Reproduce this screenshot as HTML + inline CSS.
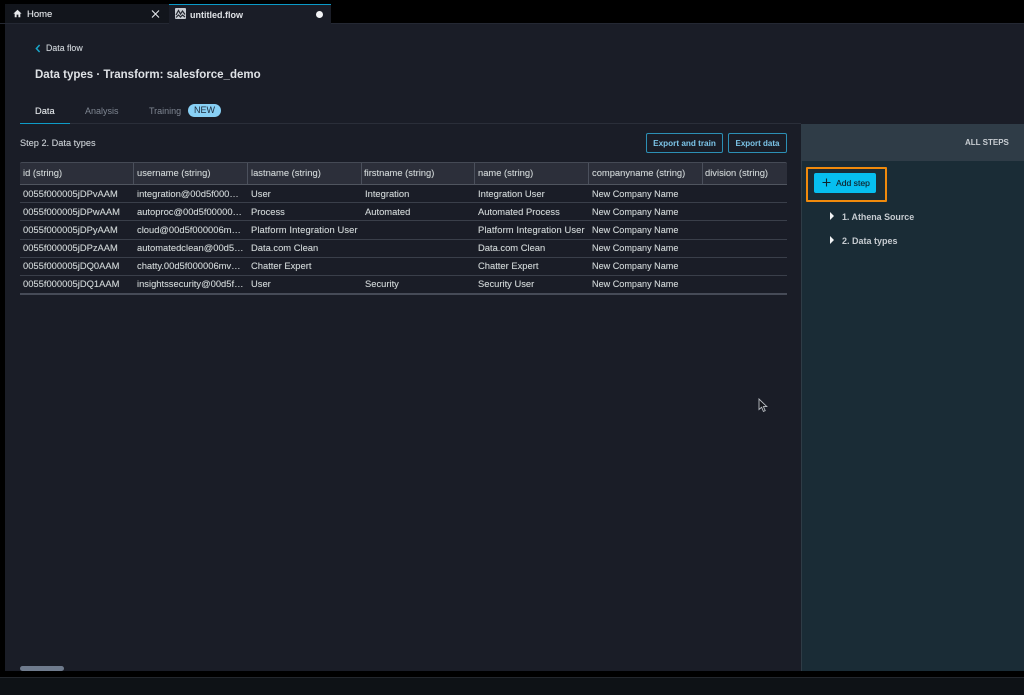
<!DOCTYPE html>
<html lang="en">
<head>
<meta charset="utf-8">
<title>untitled.flow</title>
<style>
html,body{margin:0;padding:0;background:#000;}
body{width:1024px;height:695px;overflow:hidden;position:relative;font-family:"Liberation Sans",sans-serif;}
#w{position:absolute;left:0;top:0;width:1024px;height:695px;filter:blur(.35px);}
.a{position:absolute;}
.t{position:absolute;white-space:nowrap;font-size:9.4px;line-height:12px;color:#ccd2d3;text-shadow:0 0 .4px rgba(213,219,219,.7);}
.h{color:#ccd2d3;}
.c{font-size:9.1px;}
.p{letter-spacing:.1px;}
.l{position:absolute;left:20px;width:767px;height:1px;background:#3a3f4a;}
.v{position:absolute;top:163px;width:1px;height:22px;background:#4b505c;}
</style>
</head>
<body>
<div id="w">
<!-- tab bar -->
<div class="a" style="left:5px;top:4px;width:164px;height:19px;background:#12151c;"></div>
<div class="a" style="left:169px;top:4px;width:162px;height:20px;background:#1a1d27;border-top:1.5px solid #0a9ac8;box-sizing:border-box;"></div>
<svg class="a" style="left:13px;top:9px" width="9" height="9" viewBox="0 0 9 9"><path d="M4.5 .8 L8.6 4.6 H7.3 V8.2 H5.4 V5.6 H3.6 V8.2 H1.7 V4.6 H.4 Z" fill="#e8eaed"/></svg>
<div class="t" style="left:27px;top:8.5px;font-size:9.5px;color:#e3e6ea;">Home</div>
<svg class="a" style="left:151px;top:9px" width="9" height="10" viewBox="0 0 9 10"><path d="M1 1.5 L8 8.5 M8 1.5 L1 8.5" stroke="#e3e6ea" stroke-width="1.1" fill="none"/></svg>
<svg class="a" style="left:175px;top:8px" width="11" height="11" viewBox="0 0 11 11"><rect width="11" height="11" rx="1" fill="#c8ccd2"/><path d="M1 7 L3.5 2.5 L5.5 6 L7.5 3 L10 6.5 M1 9.5 L3.5 7 L5.5 9 L7.5 7 L10 9" stroke="#23262f" stroke-width="1.2" fill="none"/></svg>
<div class="t" style="left:190px;top:8.5px;font-size:9px;font-weight:bold;color:#dfe2e6;text-shadow:none;">untitled.flow</div>
<div class="a" style="left:316px;top:10.5px;width:7px;height:7px;border-radius:50%;background:#f2f3f5;"></div>
<!-- main -->
<div class="a" style="left:5px;top:23px;width:1019px;height:648px;background:#1a1d27;"></div>
<div class="a" style="left:0;top:23px;width:1024px;height:1px;background:#242833;"></div>
<div class="a" style="left:169px;top:23px;width:162px;height:1px;background:#1a1d27;"></div>
<svg class="a" style="left:35px;top:44px" width="6" height="9" viewBox="0 0 6 9"><path d="M4.6 1 L1.4 4.5 L4.6 8" stroke="#19a6c9" stroke-width="1.5" fill="none"/></svg>
<div class="t" style="left:46px;top:42px;font-size:8.8px;color:#c9ced4;">Data flow</div>
<div class="t" style="left:35px;top:68px;font-size:11.5px;line-height:15px;font-weight:bold;color:#dfe2e6;text-shadow:none;">Data types · Transform: salesforce_demo</div>
<div class="t" style="left:35px;top:104.5px;font-size:9.3px;color:#e0e3e7;">Data</div>
<div class="t" style="left:85px;top:104.5px;font-size:9px;color:#7f8692;text-shadow:none;">Analysis</div>
<div class="t" style="left:149px;top:104.5px;font-size:9px;color:#7f8692;text-shadow:none;">Training</div>
<div class="a" style="left:188px;top:104px;width:33px;height:13px;border-radius:7px;background:#88d0f5;color:#1c2a3a;font-size:9px;line-height:13px;text-align:center;">NEW</div>
<div class="a" style="left:20px;top:123px;width:781px;height:1px;background:#2a2e39;"></div>
<div class="a" style="left:20px;top:122.5px;width:50px;height:1.5px;background:#0e9cc8;"></div>
<!-- subheader -->
<div class="t" style="left:20px;top:137px;font-size:9.2px;color:#c6cbd1;">Step 2. Data types</div>
<div class="a" style="left:646px;top:133px;width:77px;height:20px;box-sizing:border-box;border:1px solid #2c8fb5;border-radius:2px;color:#7cc4e8;font-size:8.2px;font-weight:bold;line-height:19px;text-align:center;">Export and train</div>
<div class="a" style="left:728px;top:133px;width:59px;height:20px;box-sizing:border-box;border:1px solid #2c8fb5;border-radius:2px;color:#7cc4e8;font-size:8px;font-weight:bold;line-height:19px;text-align:center;">Export data</div>
<!-- table -->
<div class="a" style="left:20px;top:162px;width:767px;height:23px;background:#2c2f3a;border-top:1px solid #454a55;box-sizing:border-box;border-radius:2px 2px 0 0;"></div>
<div class="v" style="left:133px"></div><div class="v" style="left:247px"></div><div class="v" style="left:361px"></div><div class="v" style="left:474px"></div><div class="v" style="left:588px"></div><div class="v" style="left:702px"></div>
<div class="l" style="top:184px;background:#50555f;"></div>
<div class="l" style="top:202px"></div><div class="l" style="top:220px"></div><div class="l" style="top:239px"></div><div class="l" style="top:257px"></div><div class="l" style="top:275px"></div>
<div class="l" style="top:293px;height:2px;background:#464b57;"></div>

<div class="t h" style="left:23px;top:167px">id (string)</div>
<div class="t h" style="left:137px;top:167px">username (string)</div>
<div class="t h" style="left:251px;top:167px">lastname (string)</div>
<div class="t h" style="left:364px;top:167px">firstname (string)</div>
<div class="t h" style="left:478px;top:167px">name (string)</div>
<div class="t h" style="left:592px;top:167px">companyname (string)</div>
<div class="t h" style="left:705px;top:167px">division (string)</div>

<div class="t" style="left:23px;top:187.5px">0055f000005jDPvAAM</div>
<div class="t" style="left:137px;top:187.5px">integration@00d5f000…</div>
<div class="t" style="left:251px;top:187.5px">User</div>
<div class="t" style="left:365px;top:187.5px">Integration</div>
<div class="t" style="left:478px;top:187.5px">Integration User</div>
<div class="t c" style="left:592px;top:187.5px">New Company Name</div>

<div class="t" style="left:23px;top:205.5px">0055f000005jDPwAAM</div>
<div class="t" style="left:137px;top:205.5px">autoproc@00d5f00000…</div>
<div class="t" style="left:251px;top:205.5px">Process</div>
<div class="t" style="left:365px;top:205.5px">Automated</div>
<div class="t" style="left:478px;top:205.5px">Automated Process</div>
<div class="t c" style="left:592px;top:205.5px">New Company Name</div>

<div class="t" style="left:23px;top:223.5px">0055f000005jDPyAAM</div>
<div class="t" style="left:137px;top:223.5px">cloud@00d5f000006m…</div>
<div class="t p" style="left:251px;top:223.5px">Platform Integration User</div>
<div class="t p" style="left:478px;top:223.5px">Platform Integration User</div>
<div class="t c" style="left:592px;top:223.5px">New Company Name</div>

<div class="t" style="left:23px;top:241.5px">0055f000005jDPzAAM</div>
<div class="t" style="left:137px;top:241.5px">automatedclean@00d5…</div>
<div class="t" style="left:251px;top:241.5px">Data.com Clean</div>
<div class="t" style="left:478px;top:241.5px">Data.com Clean</div>
<div class="t c" style="left:592px;top:241.5px">New Company Name</div>

<div class="t" style="left:23px;top:260px">0055f000005jDQ0AAM</div>
<div class="t" style="left:137px;top:260px">chatty.00d5f000006mv…</div>
<div class="t" style="left:251px;top:260px">Chatter Expert</div>
<div class="t" style="left:478px;top:260px">Chatter Expert</div>
<div class="t c" style="left:592px;top:260px">New Company Name</div>

<div class="t" style="left:23px;top:278px">0055f000005jDQ1AAM</div>
<div class="t" style="left:137px;top:278px">insightssecurity@00d5f…</div>
<div class="t" style="left:251px;top:278px">User</div>
<div class="t" style="left:365px;top:278px">Security</div>
<div class="t" style="left:478px;top:278px">Security User</div>
<div class="t c" style="left:592px;top:278px">New Company Name</div>

<!-- cursor -->
<svg class="a" style="left:758px;top:398px" width="11" height="15" viewBox="0 0 11 15"><path d="M1 1 V11.5 L3.6 9.2 L5.4 13.4 L7.2 12.6 L5.4 8.6 H8.8 Z" fill="#14161c" stroke="#b9bdc3" stroke-width=".9"/></svg>

<!-- right panel -->
<div class="a" style="left:801px;top:124px;width:223px;height:547px;background:#1a2c36;border-left:1px solid #2f3c46;box-sizing:border-box;"></div>
<div class="a" style="left:801px;top:124px;width:223px;height:37px;background:#2f3c47;"></div>
<div class="t" style="left:965px;top:136.5px;font-size:8px;font-weight:bold;color:#c9ced3;text-shadow:none;">ALL STEPS</div>
<div class="a" style="left:806px;top:167px;width:81px;height:35px;box-sizing:border-box;border:2.5px solid #f08a0c;border-radius:1px;"></div>
<div class="a" style="left:814px;top:173px;width:62px;height:20px;background:#06bff0;border-radius:2px;"></div>
<svg class="a" style="left:822px;top:178px" width="9" height="9" viewBox="0 0 9 9"><path d="M4.5 .5 V8.5 M.5 4.5 H8.5" stroke="#10222c" stroke-width="1.1" fill="none"/></svg>
<div class="t" style="left:836px;top:177px;font-size:8.6px;color:#10222c;text-shadow:0 0 .4px rgba(16,34,44,.7);">Add step</div>
<svg class="a" style="left:830px;top:212px" width="4" height="8" viewBox="0 0 4 8"><path d="M0 0 L4 4 L0 8 Z" fill="#f2f3f5"/></svg>
<div class="t" style="left:842px;top:211px;font-size:8.9px;font-weight:bold;color:#c6cbd0;text-shadow:none;">1. Athena Source</div>
<svg class="a" style="left:830px;top:236px" width="4" height="8" viewBox="0 0 4 8"><path d="M0 0 L4 4 L0 8 Z" fill="#f2f3f5"/></svg>
<div class="t" style="left:842px;top:235px;font-size:9px;font-weight:bold;color:#c6cbd0;text-shadow:none;">2. Data types</div>

<!-- scrollbar -->
<div class="a" style="left:20px;top:666px;width:44px;height:5px;border-radius:3px;background:#6f7b8d;"></div>
<!-- bottom -->
<div class="a" style="left:0;top:671px;width:1024px;height:6px;background:#000;"></div>
<div class="a" style="left:0;top:677px;width:1024px;height:18px;background:#0e1216;border-top:1px solid #23272d;box-sizing:border-box;"></div>
</div>
</body>
</html>
